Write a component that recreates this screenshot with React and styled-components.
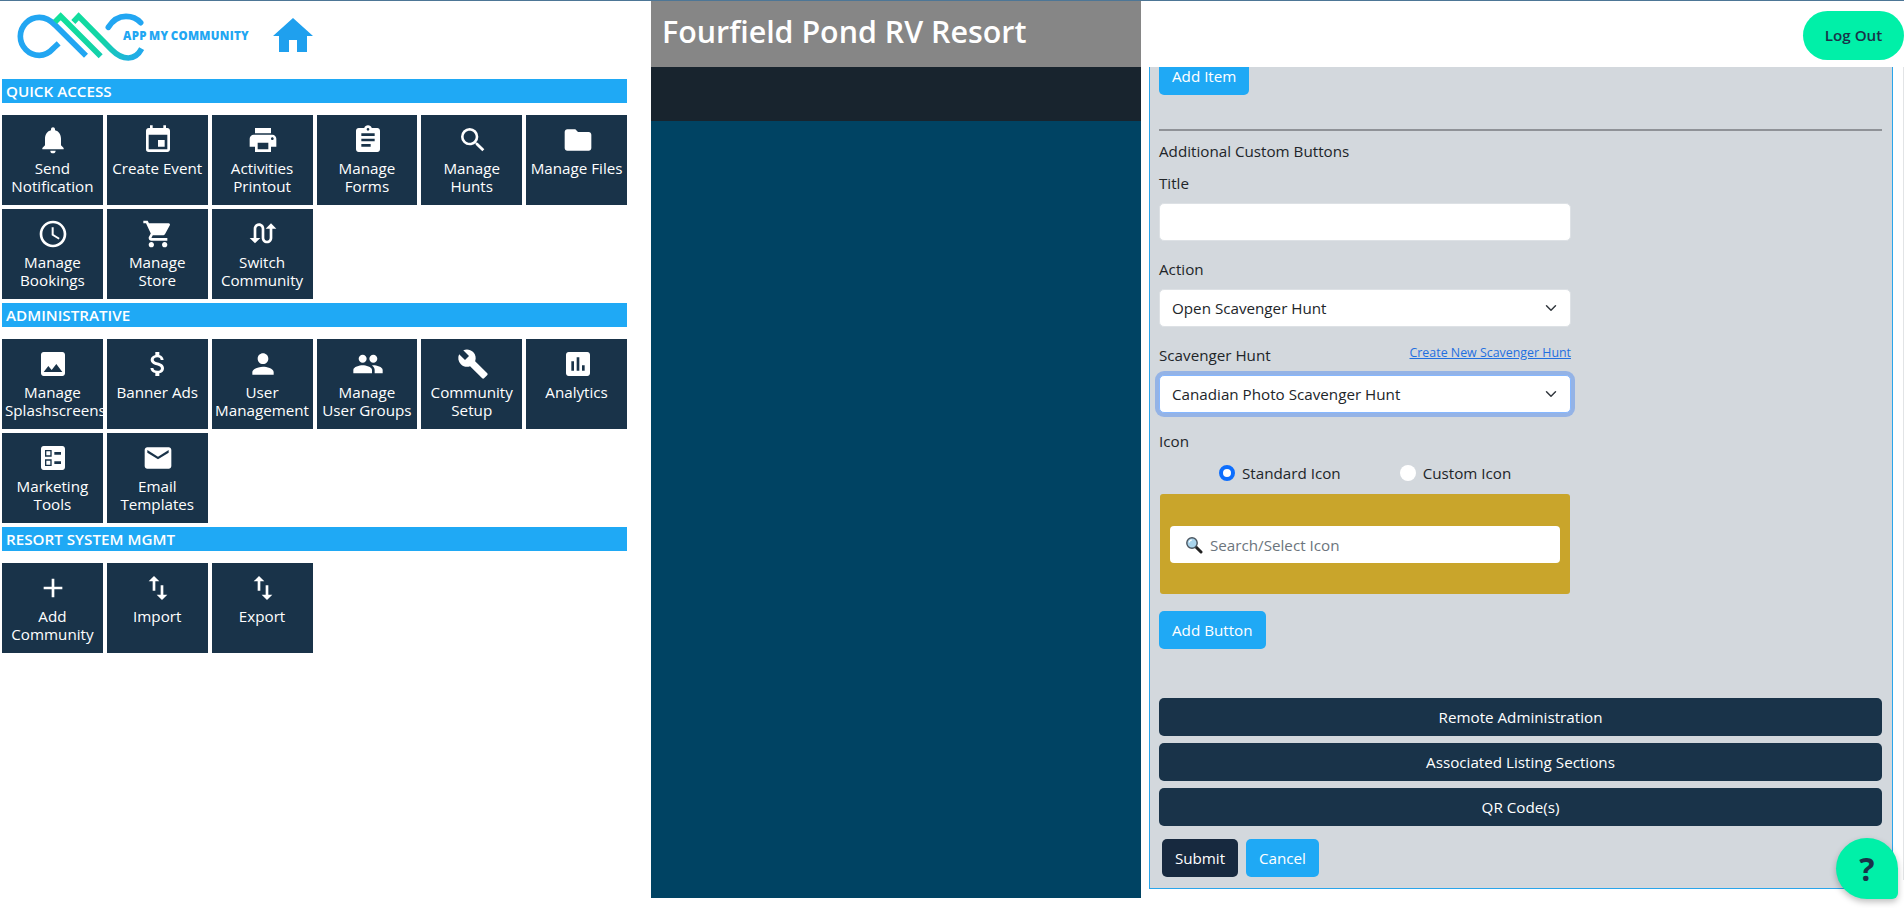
import React from "react";
import styled, { createGlobalStyle } from "styled-components";
import {
  MdNotifications,
  MdEvent,
  MdPrint,
  MdAssignment,
  MdSearch,
  MdFolder,
  MdAccessTime,
  MdShoppingCart,
  MdSwapCalls,
  MdImage,
  MdAttachMoney,
  MdPerson,
  MdPeople,
  MdBuild,
  MdAssessment,
  MdBallot,
  MdEmail,
  MdAdd,
  MdImportExport,
  MdHome,
} from "react-icons/md";

const FONT = `"Open Sans", "Noto Sans", "Liberation Sans", sans-serif`;

const sections = [
  {
    title: "QUICK ACCESS",
    tiles: [
      [MdNotifications, "Send Notification"],
      [MdEvent, "Create Event"],
      [MdPrint, "Activities Printout"],
      [MdAssignment, "Manage Forms"],
      [MdSearch, "Manage Hunts"],
      [MdFolder, "Manage Files"],
      [MdAccessTime, "Manage Bookings"],
      [MdShoppingCart, "Manage Store"],
      [MdSwapCalls, "Switch Community"],
    ],
  },
  {
    title: "ADMINISTRATIVE",
    tiles: [
      [MdImage, "Manage Splashscreens"],
      [MdAttachMoney, "Banner Ads"],
      [MdPerson, "User Management"],
      [MdPeople, "Manage\nUser Groups"],
      [MdBuild, "Community Setup"],
      [MdAssessment, "Analytics"],
      [MdBallot, "Marketing Tools"],
      [MdEmail, "Email Templates"],
    ],
  },
  {
    title: "RESORT SYSTEM MGMT",
    tiles: [
      [MdAdd, "Add Community"],
      [MdImportExport, "Import"],
      [MdImportExport, "Export"],
    ],
  },
];

const Logo = () => (
  <LogoBox>
    <svg width="150" height="60" viewBox="0 0 450 180" fill="none" strokeWidth="17">
      <defs>
        <linearGradient id="peak" gradientUnits="userSpaceOnUse" x1="150" y1="20" x2="390" y2="150">
          <stop offset="0" stopColor="#12e09a" />
          <stop offset="0.55" stopColor="#12d3a8" />
          <stop offset="1" stopColor="#22a8ee" />
        </linearGradient>
      </defs>
      <path d="M228 143 L136 52 Q114 28 88 28 A57 57 0 1 0 88 142 Q111 142 131 120 L146 106" stroke="#22a6f2" />
      <path d="M135 42 L152 25 L272 145" stroke="url(#peak)" />
      <path d="M190 42 L206 25 L305 125 Q330 150 355 150 Q380 150 395 122" stroke="url(#peak)" />
      <path d="M295 58 Q315 25 348 25 Q375 25 392 44" stroke="#22a6f2" strokeLinecap="round" />
    </svg>
    <LogoText>APP MY COMMUNITY</LogoText>
  </LogoBox>
);

const App = () => {
  return (
    <Page>
      <GlobalStyle />
      <Sidebar>
        <Brand>
          <Logo />
          <HomeLink>
            <MdHome size={48} />
          </HomeLink>
        </Brand>
        {sections.map((section) => (
          <Section key={section.title}>
            <SectionBar>{section.title}</SectionBar>
            <TileGrid>
              {section.tiles.map(([Icon, label]) => (
                <Tile key={label}>
                  <Icon size={32} />
                  <TileLabel>{label}</TileLabel>
                </Tile>
              ))}
            </TileGrid>
          </Section>
        ))}
      </Sidebar>

      <Preview>
        <PreviewTitle>Fourfield Pond RV Resort</PreviewTitle>
        <PreviewNav />
        <PreviewBody />
      </Preview>

      <Editor>
        <EditorHeader>
          <LogOut>Log Out</LogOut>
        </EditorHeader>
        <FormArea>
          <FormPanel>
            <ActionButton $clipped>Add Item</ActionButton>
            <Rule />
            <Label $top={9}>Additional Custom Buttons</Label>
            <Label $top={8}>Title</Label>
            <Field>
              <TextInput $top={7} type="text" />
              <Label $top={17}>Action</Label>
              <Select $top={7} defaultValue="hunt">
                <option value="hunt">Open Scavenger Hunt</option>
              </Select>
              <LabelRow>
                <Label>Scavenger Hunt</Label>
                <CreateLink href="#">Create New Scavenger Hunt</CreateLink>
              </LabelRow>
              <Select $top={7} $focused defaultValue="canadian">
                <option value="canadian">Canadian Photo Scavenger Hunt</option>
              </Select>
              <Label $top={17}>Icon</Label>
              <RadioRow>
                <RadioLabel>
                  <Radio type="radio" name="icon" defaultChecked />
                  Standard Icon
                </RadioLabel>
                <RadioLabel>
                  <Radio type="radio" name="icon" />
                  Custom Icon
                </RadioLabel>
              </RadioRow>
              <IconPanel>
                <IconSearchBox>
                  <SearchGlyph viewBox="0 0 18 18">
                    <path d="M10.5 10.5 L16 16" stroke="#222" strokeWidth="3" strokeLinecap="round" />
                    <circle cx="7" cy="7" r="5.2" fill="#a9d4ec" stroke="#4a5560" strokeWidth="1.4" />
                    <path d="M4.2 6.5 A3 3 0 0 1 7 4" fill="none" stroke="#ffffff" strokeWidth="1.2" />
                  </SearchGlyph>
                  <IconSearch type="text" placeholder="Search/Select Icon" />
                </IconSearchBox>
              </IconPanel>
            </Field>
            <ActionButton $top={17}>Add Button</ActionButton>
            <BarList>
              <WideButton>Remote Administration</WideButton>
              <WideButton>Associated Listing Sections</WideButton>
              <WideButton>QR Code(s)</WideButton>
            </BarList>
            <FormActions>
              <SubmitButton>Submit</SubmitButton>
              <ActionButton>Cancel</ActionButton>
            </FormActions>
          </FormPanel>
        </FormArea>
      </Editor>
      <HelpButton>?</HelpButton>
    </Page>
  );
};

export default App;

// style
const GlobalStyle = createGlobalStyle`
  html, body {
    margin: 0;
    padding: 0;
    background: #ffffff;
  }
  * {
    box-sizing: border-box;
  }
`;

const Page = styled.div`
  position: relative;
  display: flex;
  width: 1904px;
  height: 908px;
  overflow: hidden;
  border-top: 1px solid #4d7696;
  font-family: ${FONT};
  background: #ffffff;
`;

const Sidebar = styled.div`
  width: 651px;
  flex: none;
  padding-left: 2px;
`;

const Brand = styled.div`
  height: 78px;
  display: flex;
  align-items: flex-start;
  padding: 7px 0 0 8px;
`;

const LogoBox = styled.div`
  position: relative;
  width: 150px;
  height: 60px;
`;

const LogoText = styled.span`
  position: absolute;
  left: 113px;
  top: 20px;
  white-space: nowrap;
  font-size: 11.5px;
  line-height: 16px;
  font-weight: 800;
  letter-spacing: 0.3px;
  word-spacing: -1px;
  color: #22a6f2;
`;

const HomeLink = styled.div`
  margin: 4px 0 0 109px;
  color: #1fa0ee;
  line-height: 0;
`;

const Section = styled.div`
  width: 625px;
  margin-bottom: 4px;
`;

const SectionBar = styled.div`
  height: 24px;
  background: #1fa9f5;
  color: #ffffff;
  font-size: 15.2px;
  font-weight: 600;
  line-height: 24px;
  padding-left: 4px;
`;

const TileGrid = styled.div`
  display: grid;
  grid-template-columns: repeat(6, 1fr);
  grid-auto-rows: 90px;
  gap: 4px;
  margin-top: 12px;
`;

const Tile = styled.div`
  background: #193349;
  color: #ffffff;
  text-align: center;
  padding: 9px 3px 0;
  min-width: 0;

  svg {
    display: block;
    margin: 0 auto 3px;
    transform: translateX(1px);
  }
`;

const TileLabel = styled.div`
  font-size: 15.2px;
  line-height: 18px;
  white-space: pre-line;
`;

const Preview = styled.div`
  width: 490px;
  flex: none;
  height: 897px;
  display: flex;
  flex-direction: column;
`;

const PreviewTitle = styled.div`
  height: 66px;
  flex: none;
  background: #868686;
  color: #ffffff;
  font-size: 30.4px;
  font-weight: 600;
  line-height: 62px;
  padding-left: 11px;
`;

const PreviewNav = styled.div`
  height: 54px;
  flex: none;
  background: #18242e;
`;

const PreviewBody = styled.div`
  flex: 1;
  background: #004363;
`;

const Editor = styled.div`
  flex: 1;
  display: flex;
  flex-direction: column;
  min-width: 0;
`;

const EditorHeader = styled.div`
  height: 66px;
  flex: none;
  display: flex;
  justify-content: flex-end;
  padding-top: 10px;
  position: relative;
  z-index: 1;
  background: #ffffff;
`;

const LogOut = styled.button`
  width: 101px;
  height: 49px;
  padding: 0 0 2px;
  border: none;
  border-radius: 25px;
  background: #00f0a8;
  color: #193349;
  font-family: ${FONT};
  font-size: 15.2px;
  font-weight: 600;
`;

const FormArea = styled.div`
  height: 813px;
  border-right: 1px solid #e2e4e6;
`;

const FormPanel = styled.div`
  display: flow-root;
  margin-left: 8px;
  width: 744px;
  height: 822px;
  padding: 0 10px 0 9px;
  background: #d3d8dd;
  border: 1px solid #2aa5ea;
  border-top: none;
  color: #212529;
`;

const ActionButton = styled.button`
  display: block;
  height: 38px;
  margin-top: ${(props) => (props.$clipped ? "-10px" : `${props.$top || 0}px`)};
  padding: 0 13px;
  border: none;
  border-radius: 5px;
  background: #1fa9f5;
  color: #ffffff;
  font-family: ${FONT};
  font-size: 15.2px;
`;

const Rule = styled.hr`
  margin: 34px 0 0;
  height: 2px;
  border: none;
  background: #8f9297;
`;

const Label = styled.div`
  margin-top: ${(props) => props.$top || 0}px;
  padding-bottom: 2px;
  font-size: 15.2px;
  line-height: 22px;
`;

const Field = styled.div`
  width: 412px;
`;

const TextInput = styled.input`
  display: block;
  width: 100%;
  height: 38px;
  margin-top: ${(props) => props.$top}px;
  border: 1px solid #dde1e5;
  border-radius: 5px;
  background: #ffffff;
`;

const Select = styled.select`
  display: block;
  width: 100%;
  height: 38px;
  margin-top: ${(props) => props.$top}px;
  padding: 0 36px 0 12px;
  appearance: none;
  border: 1px solid ${(props) => (props.$focused ? "#86b7fe" : "#dde1e5")};
  border-radius: 5px;
  background: #ffffff url("data:image/svg+xml,%3csvg xmlns='http://www.w3.org/2000/svg' viewBox='0 0 16 16'%3e%3cpath fill='none' stroke='%23343a40' stroke-linecap='round' stroke-linejoin='round' stroke-width='2' d='M2 5l6 6 6-6'/%3e%3c/svg%3e") no-repeat right 12px center / 14px 12px;
  box-shadow: ${(props) => (props.$focused ? "0 0 0 4px #94b3e6" : "none")};
  color: #212529;
  font-family: ${FONT};
  font-size: 15.2px;
`;

const LabelRow = styled.div`
  display: flex;
  justify-content: space-between;
  align-items: flex-start;
  margin-top: 17px;
`;

const CreateLink = styled.a`
  color: #1f6fe0;
  font-size: 12.4px;
  line-height: 18px;
  text-decoration: underline;
`;

const RadioRow = styled.div`
  display: flex;
  gap: 59px;
  margin-top: 7px;
  padding-left: 60px;
  height: 24px;
`;

const RadioLabel = styled.label`
  display: flex;
  align-items: center;
  gap: 7px;
  font-size: 15.2px;
  line-height: 24px;
`;

const Radio = styled.input`
  appearance: none;
  width: 16px;
  height: 16px;
  margin: 0;
  border-radius: 50%;
  background: #ffffff;

  &:checked {
    border: 4.5px solid #0d6efd;
  }
`;

const IconPanel = styled.div`
  margin: 9px 1px 0;
  height: 100px;
  padding: 32px 10px 0;
  background: #c9a52b;
  border-radius: 3px;
`;

const IconSearchBox = styled.div`
  position: relative;
`;

const SearchGlyph = styled.svg`
  position: absolute;
  left: 15px;
  top: 10px;
  width: 18px;
  height: 18px;
`;

const IconSearch = styled.input`
  display: block;
  width: 100%;
  height: 37px;
  padding: 0 14px 0 40px;
  border: none;
  border-radius: 4px;
  background: #ffffff;
  font-family: ${FONT};
  font-size: 15.2px;

  &::placeholder {
    color: #6c757d;
  }
`;

const BarList = styled.div`
  display: flex;
  flex-direction: column;
  gap: 7px;
  margin-top: 49px;
`;

const WideButton = styled.button`
  height: 38px;
  border: none;
  border-radius: 5px;
  background: #193349;
  color: #ffffff;
  font-family: ${FONT};
  font-size: 15.2px;
`;

const FormActions = styled.div`
  display: flex;
  gap: 8px;
  margin: 13px 0 0 3px;
`;

const SubmitButton = styled.button`
  height: 38px;
  width: 76px;
  border: none;
  border-radius: 5px;
  background: #17293f;
  color: #ffffff;
  font-family: ${FONT};
  font-size: 15.2px;
`;

const HelpButton = styled.button`
  position: absolute;
  left: 1836px;
  top: 837px;
  width: 62px;
  height: 61px;
  padding: 0;
  border: none;
  border-radius: 50% 50% 6px 50%;
  background: #00f0a8;
  color: #193349;
  font-family: ${FONT};
  font-size: 32px;
  font-weight: 700;
  line-height: 60px;
  box-shadow: 0 3px 6px rgba(0, 0, 0, 0.25);
`;
